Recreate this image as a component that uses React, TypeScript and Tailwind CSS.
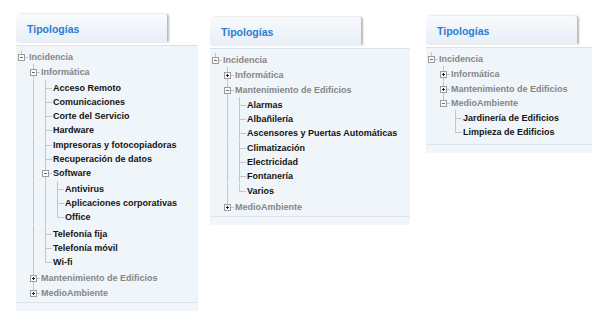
import React from 'react';

type TreeNode = { label: string; children?: TreeNode[]; open?: boolean };

type Row = {
  label: string;
  depth: number;
  ancestorsLast: boolean[];
  last: boolean;
  hasChildren: boolean;
  open: boolean;
  pt: number;
  pb: number;
};

const leaves = (names: string[]): TreeNode[] => names.map((label) => ({ label }));

const MANTENIMIENTO = leaves([
  'Alarmas',
  'Albañilería',
  'Ascensores y Puertas Automáticas',
  'Climatización',
  'Electricidad',
  'Fontanería',
  'Varios',
]);

const MEDIO = leaves(['Jardinería de Edificios', 'Limpieza de Edificios']);

const INFORMATICA: TreeNode[] = [
  ...leaves([
    'Acceso Remoto',
    'Comunicaciones',
    'Corte del Servicio',
    'Hardware',
    'Impresoras y fotocopiadoras',
    'Recuperación de datos',
  ]),
  { label: 'Software', open: true, children: leaves(['Antivirus', 'Aplicaciones corporativas', 'Office']) },
  ...leaves(['Telefonía fija', 'Telefonía móvil', 'Wi-fi']),
];

const PANELS: { top: string; left: string; width: string; tree: TreeNode[] }[] = [
  {
    top: 'mt-[14px]',
    left: 'ml-[16px]',
    width: 'w-[182px]',
    tree: [
      {
        label: 'Incidencia',
        open: true,
        children: [
          { label: 'Informática', open: true, children: INFORMATICA },
          { label: 'Mantenimiento de Edificios', children: MANTENIMIENTO },
          { label: 'MedioAmbiente', children: MEDIO },
        ],
      },
    ],
  },
  {
    top: 'mt-[17px]',
    left: 'ml-[12px]',
    width: 'w-[200px]',
    tree: [
      {
        label: 'Incidencia',
        open: true,
        children: [
          { label: 'Informática', children: INFORMATICA },
          { label: 'Mantenimiento de Edificios', open: true, children: MANTENIMIENTO },
          { label: 'MedioAmbiente', children: MEDIO },
        ],
      },
    ],
  },
  {
    top: 'mt-[16px]',
    left: 'ml-[16px]',
    width: 'w-[166px]',
    tree: [
      {
        label: 'Incidencia',
        open: true,
        children: [
          { label: 'Informática', children: INFORMATICA },
          { label: 'Mantenimiento de Edificios', children: MANTENIMIENTO },
          { label: 'MedioAmbiente', open: true, children: MEDIO },
        ],
      },
    ],
  },
];

// flatten the tree into rows, nested lists get a little margin top/bottom
function flatten(nodes: TreeNode[], depth: number, ancestorsLast: boolean[], out: Row[], nested: boolean) {
  nodes.forEach((n, i) => {
    const last = i === nodes.length - 1;
    out.push({
      label: n.label,
      depth,
      ancestorsLast,
      last,
      hasChildren: !!n.children,
      open: !!n.open,
      pt: nested && i === 0 ? 1 : 0,
      pb: 0,
    });
    if (n.children && n.open) flatten(n.children, depth + 1, [...ancestorsLast, last], out, true);
  });
  if (nested) out[out.length - 1].pb += 2;
}

const LINE = '#c6c6c6';

type Kind = 'blank' | 'pipe' | 'tee' | 'elbow';

const Cell: React.FC<{ kind: Kind; pt: number; icon?: 'plus' | 'minus' }> = ({ kind, pt, icon }) => {
  const hasLine = kind !== 'blank';
  return (
    <div className="flex w-[12px] shrink-0 flex-col">
      {pt > 0 && <div className={hasLine ? 'ml-[5px] h-[1px] w-px bg-[#c6c6c6]' : 'h-[1px]'} />}
      <svg width="12" className="h-[14.3px] shrink-0" viewBox="0 0 12 14.3">
        {kind === 'pipe' && <line x1="5.5" y1="0" x2="5.5" y2="14.3" stroke={LINE} />}
        {kind === 'tee' && <line x1="5.5" y1="0" x2="5.5" y2="14.3" stroke={LINE} />}
        {kind === 'elbow' && <line x1="5.5" y1="0" x2="5.5" y2="7.5" stroke={LINE} />}
        {(kind === 'tee' || kind === 'elbow') && <line x1="5.5" y1="7.5" x2="12" y2="7.5" stroke={LINE} />}
        {icon && (
          <g>
            <rect x="2.5" y="4.5" width="6" height="6" fill="#fbfbfb" stroke="#9c9c9c" />
            <line x1="4" y1="7.5" x2="7" y2="7.5" stroke={icon === 'plus' ? '#222' : '#6a6a6a'} />
            {icon === 'plus' && <line x1="5.5" y1="6" x2="5.5" y2="9" stroke="#222" />}
          </g>
        )}
      </svg>
      <div className={kind === 'pipe' || kind === 'tee' ? 'ml-[5px] w-px flex-1 bg-[#c6c6c6]' : 'flex-1'} />
    </div>
  );
};

const PB: Record<number, string> = { 0: '', 2: 'pb-[2px]', 4: 'pb-[4px]', 6: 'pb-[6px]' };

const TreeRow: React.FC<{ row: Row }> = ({ row }) => (
  <div className="flex">
    {row.ancestorsLast.map((l, k) => (
      <Cell key={k} kind={l ? 'blank' : 'pipe'} pt={row.pt} />
    ))}
    <Cell
      kind={row.last ? 'elbow' : 'tee'}
      pt={row.pt}
      icon={row.hasChildren ? (row.open ? 'minus' : 'plus') : undefined}
    />
    <div className={`${row.pt ? 'pt-[1px]' : ''} ${PB[row.pb]}`}>
      <div
        className={`ml-[1px] h-[14.3px] whitespace-nowrap text-[9px] font-bold leading-[14.3px] ${
          row.depth <= 1 ? 'text-[#868686]' : 'text-[#141414]'
        }`}
      >
        {row.label}
      </div>
    </div>
  </div>
);

const Panel: React.FC<{ top: string; left: string; width: string; tree: TreeNode[] }> = ({ top, left, width, tree }) => {
  const rows: Row[] = [];
  flatten(tree, 0, [], rows, false);
  return (
    <div className={`${top} ${left} ${width} shrink-0`}>
      <div className="flex h-[28px] w-[151px] items-center rounded-t-[3px] bg-linear-to-b from-[#f8fafd] to-[#e8eff7] pl-[11px] pt-[4px] shadow-[2px_0_2px_rgba(0,0,0,0.28)]">
        <span className="text-[10.5px] font-bold text-[#2a7dd2]">Tipologías</span>
      </div>
      <div className="mt-[3px] border-t border-[#d9e3ed] bg-[#f0f5fa] pt-[4px]">
        {rows.map((r, i) => (
          <TreeRow key={i} row={r} />
        ))}
      </div>
      <div className="h-[9px] border-t border-[#dbe3ec] bg-[#f2f6fa]" />
    </div>
  );
};

const App: React.FC = () => {
  return (
    <div className="flex h-[320px] w-[600px] items-start overflow-hidden bg-white font-['Liberation_Sans',Arial,sans-serif]">
      {PANELS.map((p, i) => (
        <Panel key={i} {...p} />
      ))}
    </div>
  );
};

export default App;
